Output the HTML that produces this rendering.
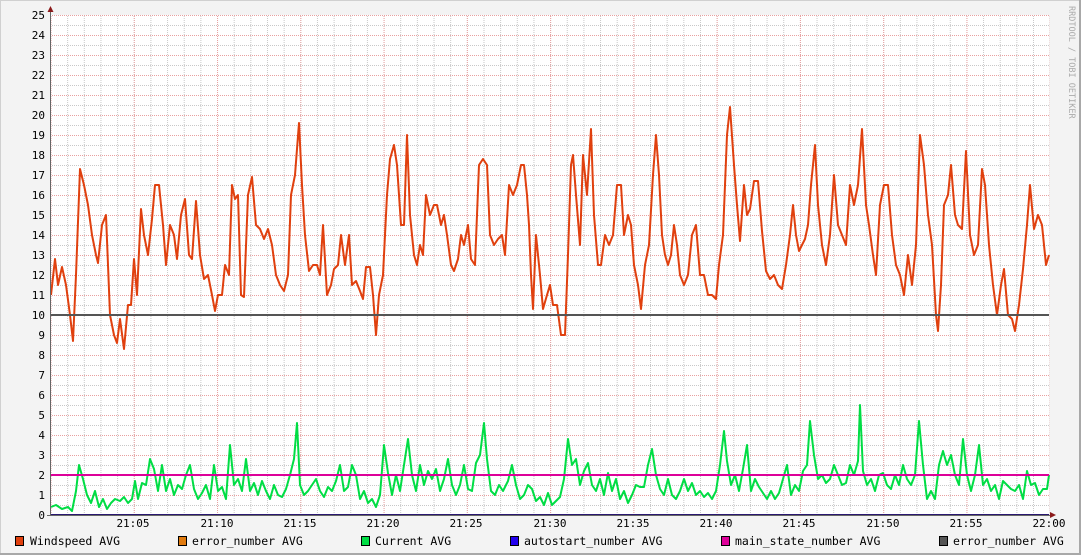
<!DOCTYPE html>
<html><head><meta charset="utf-8"><style>
html,body{margin:0;padding:0;}
body{width:1081px;height:555px;overflow:hidden;background:#f3f3f3;}
svg{display:block;}
text{font-family:"DejaVu Sans Mono","Liberation Mono",monospace;}
</style></head><body>
<svg width="1081" height="555" viewBox="0 0 1081 555" xmlns="http://www.w3.org/2000/svg">
<defs>
<pattern id="minv" x="50.5" y="0" width="16.653" height="4" patternUnits="userSpaceOnUse"><rect x="0" y="0" width="1" height="1" fill="#c8c8c8"/><rect x="0" y="2" width="1" height="1" fill="#c8c8c8"/></pattern>
<pattern id="majv" x="50.5" y="0" width="83.27" height="4" patternUnits="userSpaceOnUse"><rect x="0" y="0" width="1" height="1" fill="#e8a0a0"/><rect x="0" y="2" width="1" height="1" fill="#e8a0a0"/></pattern>
<pattern id="minh" x="0" y="5" width="4" height="10" patternUnits="userSpaceOnUse"><rect x="0" y="0" width="1" height="1" fill="#c8c8c8"/><rect x="2" y="0" width="1" height="1" fill="#c8c8c8"/></pattern>
<pattern id="majh" x="0" y="15" width="4" height="20" patternUnits="userSpaceOnUse"><rect x="0" y="0" width="1" height="1" fill="#e8a0a0"/><rect x="2" y="0" width="1" height="1" fill="#e8a0a0"/></pattern>
</defs>
<rect x="0" y="0" width="1081" height="555" fill="#f3f3f3"/>
<rect x="0" y="0" width="1081" height="1" fill="#d0d0d0"/>
<rect x="0" y="0" width="1" height="555" fill="#d0d0d0"/>
<rect x="1079" y="0" width="2" height="555" fill="#a8a8a8"/>
<rect x="0" y="553" width="1081" height="2" fill="#a8a8a8"/>
<rect x="51" y="15" width="998" height="500" fill="#ffffff"/>
<rect x="51" y="15" width="998" height="500" fill="url(#minh)"/>
<rect x="51" y="15" width="998" height="500" fill="url(#minv)"/>
<rect x="51" y="15" width="998" height="501" fill="url(#majh)"/>
<rect x="51" y="15" width="999" height="500" fill="url(#majv)"/>
<g font-size="11" fill="#000" text-anchor="end" font-family="DejaVu Sans, Liberation Sans, sans-serif">
<text x="45" y="19" font-family="DejaVu Sans, sans-serif">25</text><text x="45" y="39">24</text><text x="45" y="59">23</text><text x="45" y="79">22</text><text x="45" y="99">21</text><text x="45" y="119">20</text><text x="45" y="139">19</text><text x="45" y="159">18</text><text x="45" y="179">17</text><text x="45" y="199">16</text><text x="45" y="219">15</text><text x="45" y="239">14</text><text x="45" y="259">13</text><text x="45" y="279">12</text><text x="45" y="299">11</text><text x="45" y="319">10</text><text x="45" y="339">9</text><text x="45" y="359">8</text><text x="45" y="379">7</text><text x="45" y="399">6</text><text x="45" y="419">5</text><text x="45" y="439">4</text><text x="45" y="459">3</text><text x="45" y="479">2</text><text x="45" y="499">1</text><text x="45" y="519">0</text>
</g>
<g font-size="11" fill="#000" text-anchor="middle">
<text x="133" y="527">21:05</text><text x="217" y="527">21:10</text><text x="300" y="527">21:15</text><text x="383" y="527">21:20</text><text x="466" y="527">21:25</text><text x="550" y="527">21:30</text><text x="633" y="527">21:35</text><text x="716" y="527">21:40</text><text x="799" y="527">21:45</text><text x="883" y="527">21:50</text><text x="966" y="527">21:55</text><text x="1049" y="527">22:00</text>
</g>
<g transform="translate(0,515) scale(1,-20)" fill="none" stroke-linejoin="round">
<polyline vector-effect="non-scaling-stroke" stroke="#00dd44" stroke-width="2" points="51,0.4 56,0.5 62,0.3 68,0.4 72,0.2 76,1.2 79,2.5 83,1.8 87,1 91,0.6 95,1.2 99,0.4 103,0.8 107,0.3 111,0.6 115,0.8 120,0.7 124,0.9 128,0.6 132,0.8 135,1.7 138,0.8 142,1.6 146,1.5 150,2.8 154,2.3 158,1.2 162,2.5 166,1.2 170,1.8 174,1 178,1.5 182,1.3 186,2 190,2.5 194,1.3 198,0.8 202,1.1 206,1.5 210,0.8 214,2.5 218,1.2 222,1.4 226,0.8 230,3.5 234,1.5 238,1.8 242,1.2 246,2.8 250,1.2 254,1.6 258,1 262,1.7 266,1.2 270,0.8 274,1.5 278,1 282,0.9 286,1.3 290,2 294,2.8 297,4.6 300,1.5 304,1 308,1.2 312,1.5 316,1.8 320,1.2 324,0.9 328,1.4 332,1.2 336,1.7 340,2.5 344,1.2 348,1.4 352,2.5 356,2 360,0.8 364,1.2 368,0.6 372,0.8 376,0.4 380,1 384,3.5 388,2.1 392,1 396,2 400,1.2 404,2.5 408,3.8 412,2 416,1.2 420,2.5 424,1.5 428,2.2 432,1.8 436,2.3 440,1.2 444,1.8 448,2.8 452,1.5 456,1 460,1.5 464,2.5 468,1.3 472,1.2 476,2.6 480,3 484,4.6 487,2.8 491,1.2 495,1 499,1.5 503,1.2 508,1.7 512,2.5 516,1.5 520,0.8 524,1 528,1.5 532,1.3 536,0.7 540,0.9 544,0.5 548,1.1 552,0.5 556,0.7 560,0.9 564,1.8 568,3.8 572,2.5 576,2.8 580,1.5 584,2.2 588,2.6 592,1.5 596,1.2 600,1.8 604,1 608,2.1 612,1.2 616,1.8 620,0.8 624,1.2 628,0.6 632,1 636,1.5 640,1.4 644,1.4 648,2.5 652,3.3 656,2 660,1.3 664,1 668,1.8 672,1 676,0.8 680,1.2 684,1.8 688,1.2 692,1.6 696,1 700,1.2 704,0.9 708,1.1 712,0.8 716,1.2 720,2.5 724,4.2 727,2.7 731,1.5 735,2 739,1.2 743,2.3 747,3.5 751,1.2 755,1.8 759,1.4 763,1.1 767,0.8 771,1.2 775,0.8 779,1.1 783,1.8 787,2.5 791,1 795,1.5 799,1.2 803,2.2 807,2.5 810,4.7 814,3 818,1.8 822,2 826,1.6 830,1.8 834,2.5 838,2 842,1.5 846,1.6 850,2.5 854,2 858,2.7 860,5.5 863,2.2 867,1.5 871,1.8 875,1.2 879,2 883,2.1 887,1.5 891,1.3 895,2 899,1.5 903,2.5 907,1.8 911,1.5 915,2 919,4.7 923,2.5 927,0.8 931,1.2 935,0.8 939,2.5 943,3.2 947,2.5 951,3 955,2 959,1.5 963,3.8 967,2 971,1.2 975,2 979,3.5 983,1.5 987,1.8 991,1.2 995,1.5 999,0.8 1003,1.7 1007,1.5 1011,1.3 1015,1.2 1019,1.5 1023,0.8 1027,2.2 1031,1.5 1035,1.6 1039,1 1043,1.3 1047,1.3 1049,2"/>
<polyline vector-effect="non-scaling-stroke" stroke="#e0400e" stroke-width="2" points="51,11 55,12.8 58,11.5 62,12.4 66,11.5 70,10 73,8.7 76,12 80,17.3 84,16.5 88,15.5 92,14 96,13 98,12.6 102,14.5 106,15 110,10 114,9 117,8.6 120,9.8 124,8.3 128,10.5 131,10.5 134,12.8 137,11 141,15.3 144,14 148,13 152,14.8 155,16.5 159,16.5 163,14.5 166,12.5 170,14.5 174,14 177,12.8 181,15 185,15.8 189,13 192,12.8 196,15.7 200,13 204,11.8 208,12 212,11 215,10.2 218,11 222,11 225,12.5 229,12 232,16.5 235,15.8 238,16 241,11 244,10.9 248,16 252,16.9 256,14.5 260,14.3 264,13.8 268,14.3 272,13.5 276,12 280,11.5 284,11.2 288,12 291,16 295,17 299,19.6 302,16.5 305,14 309,12.2 313,12.5 317,12.5 320,12 323,14.5 327,11 331,11.5 334,12.3 338,12.5 341,14 345,12.5 349,14 352,11.5 356,11.7 360,11.2 363,10.8 366,12.4 370,12.4 373,11 376,9 379,11 383,12 387,16 390,17.8 394,18.5 397,17.5 401,14.5 404,14.5 407,19 410,15 414,13 417,12.5 420,13.5 423,13 426,16 430,15 434,15.5 437,15.5 441,14.5 444,15 447,14 451,12.5 454,12.2 458,12.8 461,14 464,13.5 468,14.5 471,12.8 475,12.5 479,17.5 483,17.8 487,17.5 490,14 494,13.5 498,13.8 502,14 505,13 509,16.5 513,16 517,16.5 521,17.5 524,17.5 527,16 529,14.5 531,12 533,10.3 536,14 540,12 543,10.3 547,11 550,11.5 553,10.5 557,10.5 561,9 565,9 568,13 571,17.5 573,18 576,16 580,13.5 583,18 587,16 591,19.3 594,15 598,12.5 601,12.5 605,14 609,13.5 613,14 617,16.5 621,16.5 624,14 628,15 631,14.5 634,12.5 638,11.5 641,10.3 645,12.5 649,13.5 653,17 656,19 659,17 662,14 665,13 668,12.5 671,13 674,14.5 677,13.5 680,12 684,11.5 688,12 692,14 696,14.5 700,12 704,12 708,11 712,11 716,10.8 719,12.5 723,14 727,19 730,20.4 734,17.5 737,15.5 740,13.7 744,16.5 747,15 750,15.3 754,16.7 758,16.7 762,14.2 766,12.2 770,11.8 774,12 778,11.5 782,11.3 786,12.5 790,14 793,15.5 796,14 799,13.2 802,13.5 805,13.8 808,14.5 811,16.5 815,18.5 818,15.5 822,13.5 826,12.5 830,14 834,17 838,14.5 842,14 846,13.5 850,16.5 854,15.5 858,16.5 862,19.3 866,15.5 869,14.5 873,13 876,12 880,15.5 884,16.5 888,16.5 892,14 896,12.5 900,12 904,11 908,13 912,11.5 916,13.5 920,19 924,17.5 928,15 932,13.5 936,10 938,9.2 941,11.5 944,15.5 948,16 951,17.5 955,15 958,14.5 962,14.3 966,18.2 970,14 974,13 978,13.5 982,17.3 985,16.5 989,13.5 993,11.5 997,10 1001,11.5 1004,12.3 1008,10 1012,9.8 1015,9.2 1019,10.5 1023,12.3 1027,14.5 1030,16.5 1034,14.3 1038,15 1042,14.5 1046,12.5 1049,13"/>
</g>
<rect x="51" y="314" width="998" height="2" fill="#555555"/>
<rect x="51" y="474" width="998" height="2" fill="#dd0099"/>
<rect x="51" y="514" width="998" height="2" fill="#2a1870"/>
<rect x="50" y="12" width="1" height="504" fill="#666"/>
<rect x="47" y="515" width="1003" height="1" fill="#666"/>
<polygon points="47.5,12 53.5,12 50.5,6" fill="#8b1a1a"/>
<polygon points="1050,512 1050,518 1056,515" fill="#8b1a1a"/>
<g font-size="11.5" fill="#000">
<rect x="15.5" y="536.5" width="8" height="9" fill="#e0400e" stroke="#000"/><text x="30" y="545">Windspeed AVG</text>
<rect x="178.5" y="536.5" width="8" height="9" fill="#e07a0e" stroke="#000"/><text x="192" y="545">error_number AVG</text>
<rect x="361.5" y="536.5" width="8" height="9" fill="#00dd44" stroke="#000"/><text x="375" y="545">Current AVG</text>
<rect x="510.5" y="536.5" width="8" height="9" fill="#2200ee" stroke="#000"/><text x="524" y="545">autostart_number AVG</text>
<rect x="721.5" y="536.5" width="8" height="9" fill="#dd0099" stroke="#000"/><text x="735" y="545">main_state_number AVG</text>
<rect x="939.5" y="536.5" width="8" height="9" fill="#555555" stroke="#000"/><text x="953" y="545">error_number AVG</text>
</g>
<text x="1069" y="6" font-size="8.5" fill="#aaaaaa" transform="rotate(90 1069 6)">RRDTOOL / TOBI OETIKER</text>
</svg>
</body></html>
